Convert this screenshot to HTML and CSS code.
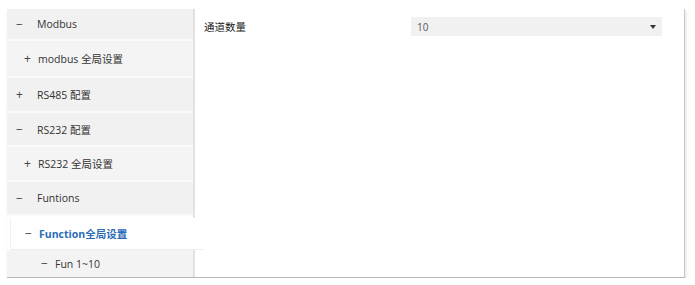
FILE: index.html
```html
<!DOCTYPE html>
<html lang="en">

<head>
    <meta charset="UTF-8">
    <meta name="viewport" content="width=device-width, initial-scale=1.0">
    <title>配置</title>
    <link rel="stylesheet" href="styles.css">
</head>

<body>
    <div class="panel">
        <div class="side">
            <div class="row h32"><span class="sign">−</span><span class="label">Modbus</span></div>
            <div class="row child h37"><span class="sign">+</span><span class="label">modbus 全局设置</span></div>
            <div class="row h35"><span class="sign">+</span><span class="label">RS485 配置</span></div>
            <div class="row h34"><span class="sign">−</span><span class="label">RS232 配置</span></div>
            <div class="row child h35"><span class="sign">+</span><span class="label">RS232 全局设置</span></div>
            <div class="row h34"><span class="sign">−</span><span class="label">Funtions</span></div>
            <div class="row child active h32"><span class="sign">−</span><span class="label">Function全局设置</span></div>
            <div class="row grand h27"><span class="sign">−</span><span class="label">Fun 1~10</span></div>
        </div>
        <div class="content">
            <div class="field">
                <span class="field-label">通道数量</span>
                <div class="select">
                    <span>10</span>
                    <span class="caret"></span>
                </div>
            </div>
        </div>
    </div>
</body>

</html>
```

FILE: styles.css
```css
body {
    margin: 0;
    background: #fff;
    font-family: "Open Sans", "Noto Sans CJK SC", sans-serif;
    font-size: 10.5px;
    color: #333;
}

.panel {
    display: flex;
    width: 677px;
    height: 268px;
    margin: 9px 0 0 7px;
    border-right: 1px solid #c8c8c8;
    border-bottom: 1px solid #b8b8b8;
    box-shadow: 1px 2px 3px rgba(0, 0, 0, .12);
}

.side {
    width: 186px;
    flex-shrink: 0;
    border-right: 2px solid #e2e2e2;
    display: flex;
    flex-direction: column;
}

.row {
    display: flex;
    align-items: center;
    box-sizing: border-box;
    padding-left: 9px;
    background: #f1f1f1;
    border-bottom: 2px solid #fafafa;
}

.row .sign {
    width: 21px;
    font-size: 12px;
    color: #444;
}

.row.child {
    padding-left: 17px;
    background: #f4f4f4;
}

.row.child .sign {
    width: 14px;
}

.row.grand {
    padding-left: 34px;
    border-bottom: none;
    background: #f3f3f3;
}

.row.grand .sign {
    width: 14px;
}

.row.active {
    background: #fff;
    margin: 2px -11px 0 3px;
    padding-left: 14px;
    border-bottom: 1px solid #eee;
    border-left: 1px solid #f0f0f0;
    position: relative;
}

.row.active .label {
    color: #2b6cb8;
    font-weight: bold;
}

.h27 { height: 27px; }
.h32 { height: 32px; }
.h34 { height: 34px; }
.h35 { height: 35px; }
.h37 { height: 37px; }

.content {
    flex: 1;
    padding: 8px 22px 0 9px;
}

.field {
    display: flex;
    align-items: center;
    justify-content: space-between;
}

.field-label {
    color: #222;
}

.select {
    width: 239px;
    height: 19px;
    background: #f1f1f1;
    display: flex;
    align-items: center;
    justify-content: space-between;
    padding: 0 6px;
    font-size: 10px;
    color: #555;
}

.caret {
    width: 0;
    height: 0;
    border-left: 3.5px solid transparent;
    border-right: 3.5px solid transparent;
    border-top: 4px solid #333;
}
```
